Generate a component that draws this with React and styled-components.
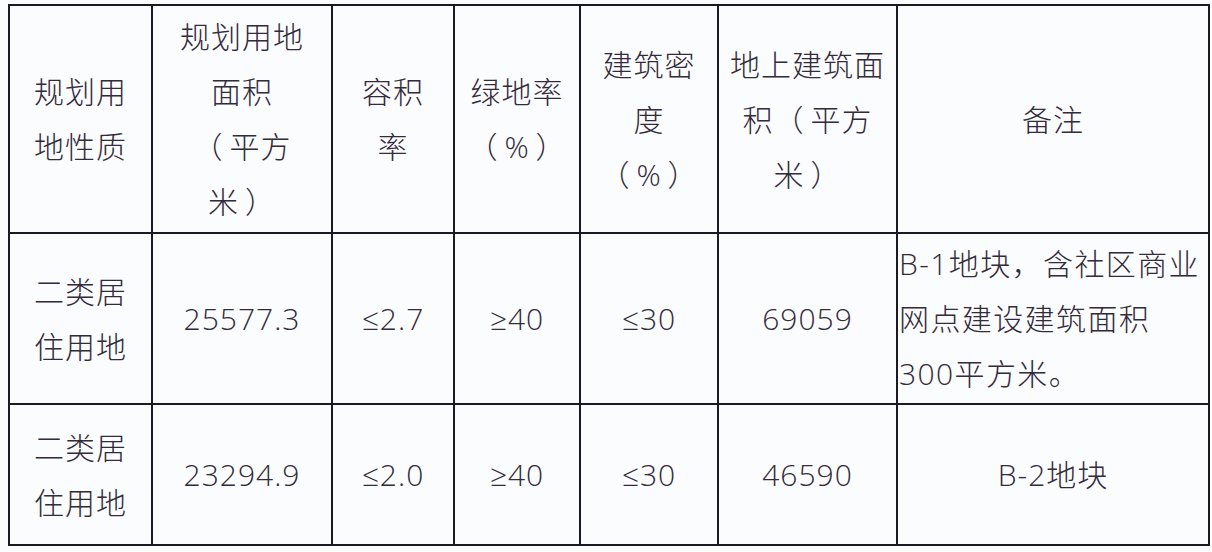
import React from 'react';
import styled, { createGlobalStyle } from 'styled-components';

const GlobalStyle = createGlobalStyle`
  html, body {
    margin: 0;
    padding: 0;
    background: #fbfcfe;
  }
`;

const Page = styled.div`
  padding: 4px 0 0 8px;
  font-family: "Open Sans", "Liberation Sans", "Noto Sans CJK SC", sans-serif;
  color: #332a3b;
`;

const Table = styled.table`
  border-collapse: collapse;
  table-layout: fixed;
  width: 1200px;
`;

const Row = styled.tr`
  height: ${(p) => p.$h}px;
`;

const Cell = styled.td`
  border: 2px solid #1b1924;
  padding: ${(p) => (p.$left ? '0 0 0 1px' : '0 4px')};
  font-size: 30px;
  font-weight: 300;
  letter-spacing: ${(p) => (p.$left ? '1.4px' : '1px')};
  line-height: 55px;
  text-align: ${(p) => (p.$left ? 'left' : 'center')};
  vertical-align: middle;
  white-space: nowrap;
  overflow: hidden;
`;

/* full-width brackets sit centred in their box in the original font */
const Open = styled.span`
  display: inline-block;
  margin-right: 6px;
`;

const Close = styled.span`
  display: inline-block;
  margin-left: 6px;
`;

const widths = [143, 180, 122, 126, 138, 179, 312];

const header = [
  ['规划用', '地性质'],
  ['规划用地', '面积', ['（', '平方'], ['米', '）']],
  ['容积', '率'],
  ['绿地率', ['（', '%', '）']],
  ['建筑密', '度', ['（', '%', '）']],
  ['地上建筑面', ['积', '（', '平方'], ['米', '）']],
  ['备注'],
];

const rows = [
  {
    h: 171,
    cells: [['二类居', '住用地'], ['25577.3'], ['≤2.7'], ['≥40'], ['≤30'], ['69059']],
    note: ['B-1地块，含社区商业', '网点建设建筑面积', '300平方米。'],
    left: true,
  },
  {
    h: 141,
    cells: [['二类居', '住用地'], ['23294.9'], ['≤2.0'], ['≥40'], ['≤30'], ['46590']],
    note: ['B-2地块'],
    left: false,
  },
];

function Piece({ text }) {
  if (text === '（') return <Open>（</Open>;
  if (text === '）') return <Close>）</Close>;
  return text;
}

function Lines({ lines }) {
  return lines.map((l, i) => (
    <React.Fragment key={i}>
      {i > 0 && <br />}
      {Array.isArray(l) ? l.map((t, j) => <Piece key={j} text={t} />) : l}
    </React.Fragment>
  ));
}

export default function App() {
  return (
    <Page>
      <GlobalStyle />
      <Table>
        <colgroup>
          {widths.map((w, i) => (
            <col key={i} style={{ width: w }} />
          ))}
        </colgroup>
        <tbody>
          <Row $h={228}>
            {header.map((lines, i) => (
              <Cell key={i}>
                <Lines lines={lines} />
              </Cell>
            ))}
          </Row>
          {rows.map((r, ri) => (
            <Row key={ri} $h={r.h}>
              {r.cells.map((lines, i) => (
                <Cell key={i}>
                  <Lines lines={lines} />
                </Cell>
              ))}
              <Cell $left={r.left}>
                <Lines lines={r.note} />
              </Cell>
            </Row>
          ))}
        </tbody>
      </Table>
    </Page>
  );
}
